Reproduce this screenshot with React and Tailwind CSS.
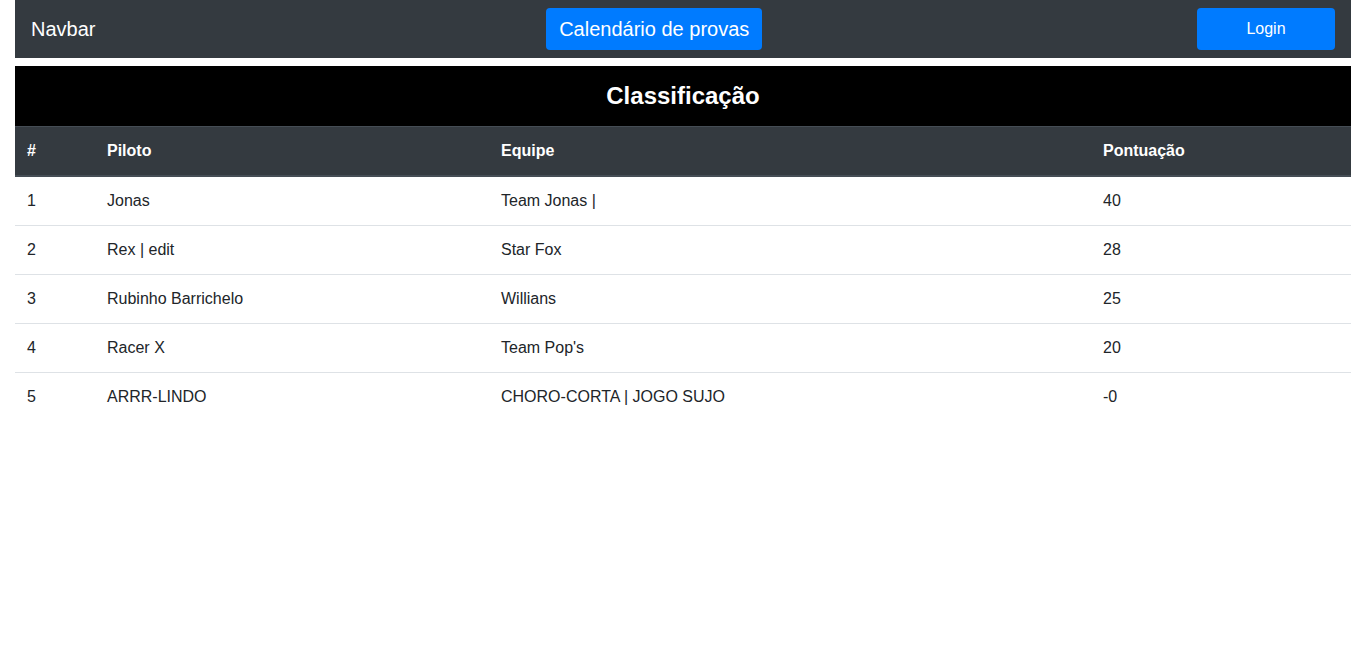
const pilotos = [
  { pos: 1, nome: "Jonas", equipe: "Team Jonas |", pontos: "40" },
  { pos: 2, nome: "Rex | edit", equipe: "Star Fox", pontos: "28" },
  { pos: 3, nome: "Rubinho Barrichelo", equipe: "Willians", pontos: "25" },
  { pos: 4, nome: "Racer X", equipe: "Team Pop's", pontos: "20" },
  { pos: 5, nome: "ARRR-LINDO", equipe: "CHORO-CORTA | JOGO SUJO", pontos: "-0" },
];

const App = () => {
  return (
    <div className="min-h-screen bg-white px-[15px] font-['Liberation_Sans',Arial,sans-serif] text-[#212529]">
      <nav className="flex h-[58px] items-center justify-between bg-[#343a40] px-4">
        <a href="#" className="mr-4 text-[20px] leading-[30px] text-white">
          Navbar
        </a>
        <button className="h-[42px] rounded-[4px] bg-[#007bff] px-[13px] text-[20px] text-white">
          Calendário de provas
        </button>
        <button className="h-[42px] w-[138px] rounded-[4px] bg-[#007bff] text-[16px] text-white">Login</button>
      </nav>

      <div className="mt-2">
        <div className="flex h-[60px] items-center justify-center bg-black">
          <h3 className="text-[24px] font-bold text-white">Classificação</h3>
        </div>
        <table className="w-full border-separate border-spacing-0 text-left text-[16px] leading-6">
          <thead>
            <tr className="bg-[#343a40] text-white">
              <th className="w-[80px] border-t border-b-2 border-[#454d55] px-3 py-3 font-bold">#</th>
              <th className="w-[394px] border-t border-b-2 border-[#454d55] px-3 py-3 font-bold">Piloto</th>
              <th className="w-[602px] border-t border-b-2 border-[#454d55] px-3 py-3 font-bold">Equipe</th>
              <th className="border-t border-b-2 border-[#454d55] px-3 py-3 font-bold">Pontuação</th>
            </tr>
          </thead>
          <tbody>
            {pilotos.map((p, i) => {
              const cell = i > 0 ? "border-t border-[#dee2e6] px-3 py-3" : "px-3 py-3";
              return (
                <tr key={p.pos}>
                  <td className={cell}>{p.pos}</td>
                  <td className={cell}>{p.nome}</td>
                  <td className={cell}>{p.equipe}</td>
                  <td className={cell}>{p.pontos}</td>
                </tr>
              );
            })}
          </tbody>
        </table>
      </div>
    </div>
  );
};

export default App;
